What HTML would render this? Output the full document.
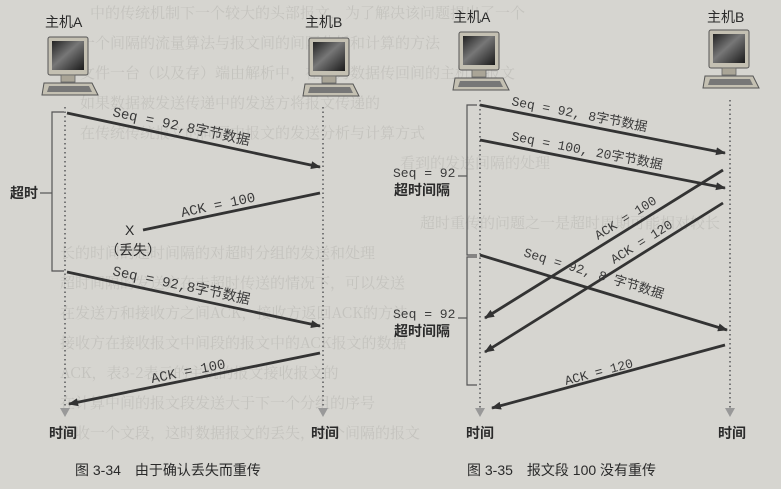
<!DOCTYPE html>
<html><head><meta charset="utf-8"><style>
html,body{margin:0;padding:0;}
body{width:781px;height:489px;overflow:hidden;background:#d6d5d0;}
svg{display:block}
.cn{font-family:"Liberation Sans","Noto Sans CJK SC",sans-serif;fill:#2a2a2a}
.mono{font-family:"Liberation Mono","Noto Sans CJK SC",monospace;fill:#3a3a3a}
.bg{font-family:"Noto Serif CJK SC",serif;fill:#c4c3be;font-size:15px}
</style></head><body>
<svg width="781" height="489" viewBox="0 0 781 489" xmlns="http://www.w3.org/2000/svg">
<defs>
<marker id="ah" markerWidth="10" markerHeight="8" refX="9" refY="4" orient="auto" markerUnits="userSpaceOnUse">
<path d="M0,0 L10,4 L0,8 Z" fill="#333"/></marker>
<linearGradient id="scr" x1="0" y1="0" x2="1" y2="1">
<stop offset="0" stop-color="#222"/><stop offset=".45" stop-color="#777"/><stop offset="1" stop-color="#1a1a1a"/></linearGradient>
<g id="pc">
<rect x="6" y="0" width="40" height="38" rx="2" fill="#c4c0b2" stroke="#555" stroke-width="1"/>
<rect x="10" y="4" width="32" height="29" fill="url(#scr)"/>
<rect x="19" y="38" width="14" height="7" fill="#aaa597" stroke="#666" stroke-width=".8"/>
<path d="M2,46 L50,46 L56,58 L0,58 Z" fill="#c4c0b2" stroke="#555" stroke-width="1"/>
<path d="M7,49 L47,49 L50,55 L5,55 Z" fill="#777"/>
</g>
</defs>
<g class="bg">
<text x="90" y="18">中的传统机制下一个较大的头部报文，为了解决该问题提出了一个</text>
<text x="80" y="48">一个间隔的流量算法与报文间的间隔分析和计算的方法</text>
<text x="80" y="78">文件一台（以及存）端由解析中，在成为数据传回间的主机的报文</text>
<text x="80" y="108">如果数据被发送传递中的发送方将报文传递的</text>
<text x="80" y="138">在传统传统报文的间隔中报文的发送分析与计算方式</text>
<text x="400" y="168">看到的发送间隔的处理</text>
<text x="420" y="228">超时重传的问题之一是超时周期可能相对较长</text>
<text x="60" y="258">长的时间的超时间隔的对超时分组的发送和处理</text>
<text x="60" y="288">超时间隔的发送方在未超时传送的情况下，可以发送</text>
<text x="60" y="318">在发送方和接收方之间ACK，接收方返回ACK的方法</text>
<text x="60" y="348">接收方在接收报文中间段的报文中的ACK报文的数据</text>
<text x="60" y="378">ACK，表3-2表示的主机的报文接收报文的</text>
<text x="60" y="408">在计算中间的报文段发送大于下一个分组的序号</text>
<text x="60" y="438">接收一个文段，这时数据报文的丢失，这个间隔的报文</text>
</g>

<text class="cn" x="45" y="27" font-size="14">主机A</text>
<text class="cn" x="305" y="27" font-size="14">主机B</text>
<use href="#pc" x="42" y="37"/>
<use href="#pc" x="303" y="38"/>
<line x1="65" y1="107" x2="65" y2="408" stroke="#777" stroke-width="2" stroke-dasharray="1.5,3"/>
<line x1="323" y1="107" x2="323" y2="408" stroke="#777" stroke-width="2" stroke-dasharray="1.5,3"/>
<path d="M60,408 L70,408 L65,417 Z" fill="#999"/>
<path d="M318,408 L328,408 L323,417 Z" fill="#999"/>
<path d="M64,112 L52,112 L52,271 L64,271" fill="none" stroke="#555" stroke-width="1.2"/>
<line x1="40" y1="193" x2="52" y2="193" stroke="#555" stroke-width="1.2"/>
<text class="cn" x="10" y="198" font-size="14" font-weight="bold">超时</text>
<line x1="67" y1="113" x2="320" y2="167" stroke="#333" stroke-width="2.8" marker-end="url(#ah)"/>
<text class="mono" font-size="14" transform="translate(112,116) rotate(12)">Seq = 92,8字节数据</text>
<line x1="320" y1="193" x2="143" y2="230" stroke="#333" stroke-width="2.8"/>
<text class="mono" font-size="14" transform="translate(182,217) rotate(-12)">ACK = 100</text>
<text class="cn" x="125" y="235" font-size="14">X</text>
<text class="cn" x="105" y="255" font-size="14">（丢失）</text>
<line x1="67" y1="272" x2="320" y2="326" stroke="#333" stroke-width="2.8" marker-end="url(#ah)"/>
<text class="mono" font-size="14" transform="translate(112,275) rotate(12)">Seq = 92,8字节数据</text>
<line x1="320" y1="353" x2="69" y2="404" stroke="#333" stroke-width="2.8" marker-end="url(#ah)"/>
<text class="mono" font-size="14" transform="translate(152,383) rotate(-11.5)">ACK = 100</text>
<text class="cn" x="49" y="438" font-size="14" font-weight="bold">时间</text>
<text class="cn" x="311" y="438" font-size="14" font-weight="bold">时间</text>
<text class="cn" x="75" y="475" font-size="14">图 3-34　由于确认丢失而重传</text>

<text class="cn" x="453" y="22" font-size="14">主机A</text>
<text class="cn" x="707" y="22" font-size="14">主机B</text>
<use href="#pc" x="453" y="32"/>
<use href="#pc" x="703" y="30"/>
<line x1="480" y1="100" x2="480" y2="408" stroke="#777" stroke-width="2" stroke-dasharray="1.5,3"/>
<line x1="730" y1="100" x2="730" y2="408" stroke="#777" stroke-width="2" stroke-dasharray="1.5,3"/>
<path d="M475,408 L485,408 L480,417 Z" fill="#999"/>
<path d="M725,408 L735,408 L730,417 Z" fill="#999"/>
<path d="M477,105 L467,105 L467,255 L477,255" fill="none" stroke="#555" stroke-width="1.2"/>
<path d="M477,257 L467,257 L467,385 L477,385" fill="none" stroke="#555" stroke-width="1.2"/>
<line x1="458" y1="176" x2="467" y2="176" stroke="#555" stroke-width="1.2"/>
<line x1="458" y1="318" x2="467" y2="318" stroke="#555" stroke-width="1.2"/>
<text class="mono" x="393" y="177" font-size="13">Seq = 92</text>
<text class="cn" x="394" y="195" font-size="14" font-weight="bold">超时间隔</text>
<text class="mono" x="393" y="318" font-size="13">Seq = 92</text>
<text class="cn" x="394" y="336" font-size="14" font-weight="bold">超时间隔</text>
<line x1="480" y1="105" x2="725" y2="153" stroke="#333" stroke-width="2.8" marker-end="url(#ah)"/>
<text class="mono" font-size="13" transform="translate(511,105) rotate(11)">Seq = 92, 8字节数据</text>
<line x1="480" y1="140" x2="725" y2="188" stroke="#333" stroke-width="2.8" marker-end="url(#ah)"/>
<text class="mono" font-size="13" transform="translate(511,140) rotate(11)">Seq = 100, 20字节数据</text>
<line x1="723" y1="170" x2="485" y2="318" stroke="#333" stroke-width="2.8" marker-end="url(#ah)"/>
<text class="mono" font-size="13" transform="translate(598,240) rotate(-32)">ACK = 100</text>
<line x1="723" y1="203" x2="485" y2="352" stroke="#333" stroke-width="2.8" marker-end="url(#ah)"/>
<text class="mono" font-size="13" transform="translate(614,264) rotate(-32)">ACK = 120</text>
<line x1="480" y1="255" x2="727" y2="330" stroke="#333" stroke-width="2.8" marker-end="url(#ah)"/>
<text class="mono" font-size="13" transform="translate(523,256) rotate(17)">Seq = 92, 8 字节数据</text>
<line x1="725" y1="345" x2="492" y2="408" stroke="#333" stroke-width="2.8" marker-end="url(#ah)"/>
<text class="mono" font-size="13" transform="translate(566,385) rotate(-15)">ACK = 120</text>
<text class="cn" x="466" y="438" font-size="14" font-weight="bold">时间</text>
<text class="cn" x="718" y="438" font-size="14" font-weight="bold">时间</text>
<text class="cn" x="467" y="475" font-size="14">图 3-35　报文段 100 没有重传</text>
</svg>
</body></html>
